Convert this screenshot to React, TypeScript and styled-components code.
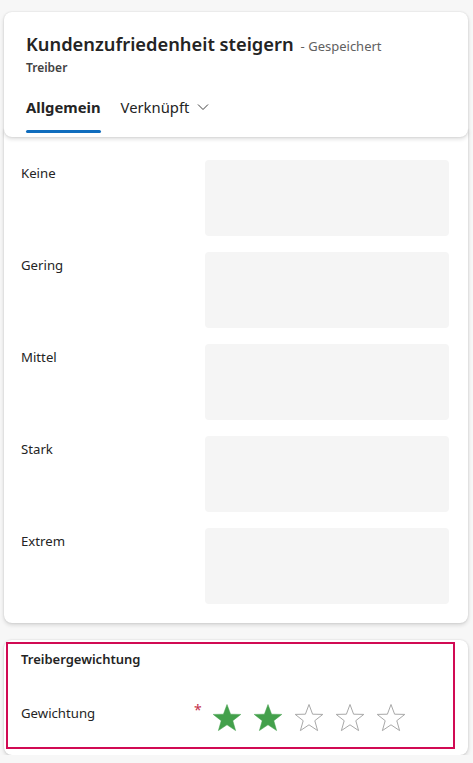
import * as React from 'react';
import styled, { createGlobalStyle } from 'styled-components';

const GlobalStyle = createGlobalStyle`
  html, body {
    margin: 0;
    padding: 0;
    background: #f7f7f7;
    font-family: "Segoe UI", "Noto Sans", "Open Sans", sans-serif;
    color: #242424;
  }
`;

const Page = styled.div`
  width: 473px;
  padding: 12px 5px 0 4px;
  box-sizing: border-box;
`;

const HeaderCard = styled.header`
  position: relative;
  z-index: 2;
  background: #fff;
  border-radius: 8px;
  box-shadow: 0 0 2px rgba(0, 0, 0, 0.12), 0 2px 4px rgba(0, 0, 0, 0.14);
  padding: 18px 22px 0 22px;
  height: 125px;
  box-sizing: border-box;
`;

const TitleRow = styled.div`
  display: flex;
  align-items: baseline;
  gap: 7px;
`;

const Title = styled.h1`
  margin: 0;
  font-size: 18.3px;
  font-weight: 600;
  line-height: 28px;
  color: #242424;
`;

const SaveState = styled.span`
  font-size: 13px;
  color: #616161;
`;

const Subtitle = styled.div`
  font-size: 12px;
  font-weight: 600;
  color: #424242;
  line-height: 16px;
  margin-top: 2px;
`;

const Tabs = styled.nav`
  display: flex;
  gap: 20px;
  margin-top: 20px;
`;

const Tab = styled.button<{ $active?: boolean }>`
  position: relative;
  display: flex;
  align-items: center;
  gap: 8px;
  border: 0;
  background: none;
  padding: 0 0 16px 0;
  font-family: inherit;
  font-size: 14.8px;
  line-height: 22px;
  font-weight: ${(p) => (p.$active ? 700 : 400)};
  color: #242424;
  cursor: pointer;

  &::after {
    content: '';
    position: absolute;
    left: 0;
    right: 0;
    bottom: 1px;
    height: 3px;
    border-radius: 2px;
    background: ${(p) => (p.$active ? '#0f6cbd' : 'transparent')};
  }
`;

const BodyCard = styled.section`
  position: relative;
  z-index: 1;
  margin-top: -8px;
  background: #fff;
  border-radius: 0 0 8px 8px;
  box-shadow: 0 0 2px rgba(0, 0, 0, 0.12), 0 2px 4px rgba(0, 0, 0, 0.14);
  padding: 31px 19px 19px 17px;
  display: flex;
  flex-direction: column;
  gap: 16px;
`;

const FieldRow = styled.div`
  display: grid;
  grid-template-columns: 184px 244px;
`;

const Label = styled.label`
  font-size: 13.2px;
  line-height: 20px;
  padding-top: 3px;
  color: #242424;
`;

const TextArea = styled.div`
  height: 76px;
  background: #f5f5f5;
  border-radius: 4px;
`;

const WeightCard = styled.section`
  margin-top: 17px;
  background: #fff;
  border-radius: 8px;
  box-shadow: 0 0 2px rgba(0, 0, 0, 0.12), 0 2px 4px rgba(0, 0, 0, 0.14);
  padding: 2px 13px 6px 2px;
`;

const FocusFrame = styled.div`
  border: 2px solid #d10a53;
  padding: 5px 13px 0 13px;
  height: 107px;
  box-sizing: border-box;
`;

const SectionTitle = styled.h2`
  margin: 0;
  font-size: 13px;
  font-weight: 600;
  line-height: 20px;
  color: #242424;
`;

const RatingRow = styled.div`
  display: flex;
  align-items: flex-start;
  margin-top: 34px;
`;

const RatingLabel = styled.label`
  width: 173px;
  font-size: 13.2px;
  line-height: 20px;
  margin-top: 0;
`;

const Required = styled.span`
  width: 18px;
  color: #c4314b;
  font-size: 14px;
  line-height: 20px;
  margin-top: -3px;
`;

const Stars = styled.div`
  display: flex;
  gap: 11px;
`;

const Star = ({ filled }: { filled: boolean }) => (
  <svg width="30" height="30" viewBox="0 0 30 30">
    <path
      d="M15 1.5 L18.6 11.2 L28.8 11.4 L20.8 17.7 L23.6 27.6 L15 21.8 L6.4 27.6 L9.2 17.7 L1.2 11.4 L11.4 11.2 Z"
      fill={filled ? '#43a04b' : '#fff'}
      stroke={filled ? '#43a04b' : '#a8a8a8'}
      strokeWidth={filled ? 0.5 : 1}
      strokeLinejoin="round"
    />
  </svg>
);

const levels = ['Keine', 'Gering', 'Mittel', 'Stark', 'Extrem'];

export default function App() {
  const rating = 2;
  return (
    <Page>
      <GlobalStyle />
      <HeaderCard>
        <TitleRow>
          <Title>Kundenzufriedenheit steigern</Title>
          <SaveState>- Gespeichert</SaveState>
        </TitleRow>
        <Subtitle>Treiber</Subtitle>
        <Tabs>
          <Tab $active>Allgemein</Tab>
          <Tab>
            Verknüpft
            <svg width="12" height="12" viewBox="0 0 12 12">
              <path d="M1 3.5 L6 8.5 L11 3.5" fill="none" stroke="#424242" strokeWidth="1" />
            </svg>
          </Tab>
        </Tabs>
      </HeaderCard>
      <BodyCard>
        {levels.map((l) => (
          <FieldRow key={l}>
            <Label>{l}</Label>
            <TextArea />
          </FieldRow>
        ))}
      </BodyCard>
      <WeightCard>
        <FocusFrame>
          <SectionTitle>Treibergewichtung</SectionTitle>
          <RatingRow>
            <RatingLabel>Gewichtung</RatingLabel>
            <Required>*</Required>
            <Stars>
              {[1, 2, 3, 4, 5].map((i) => (
                <Star key={i} filled={i <= rating} />
              ))}
            </Stars>
          </RatingRow>
        </FocusFrame>
      </WeightCard>
    </Page>
  );
}
